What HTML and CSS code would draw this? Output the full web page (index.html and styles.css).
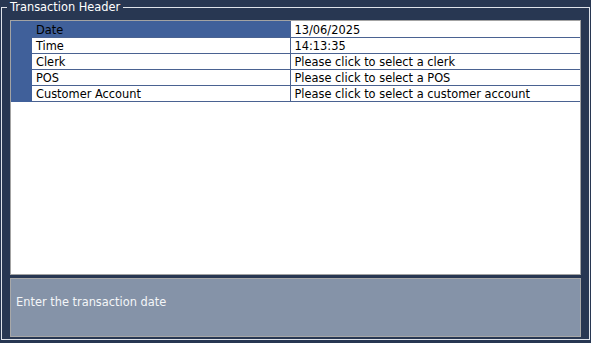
FILE: index.html
```html
<!DOCTYPE html>
<html>
<head>
<meta charset="utf-8">
<link rel="stylesheet" href="styles.css">
</head>
<body>
<fieldset class="group">
  <legend class="group-title">Transaction Header</legend>
  <div class="grid-panel">
    <table class="props">
      <tr class="selected"><td class="rh"></td><td class="name">Date</td><td class="value">13/06/2025</td></tr>
      <tr><td class="rh"></td><td class="name">Time</td><td class="value">14:13:35</td></tr>
      <tr><td class="rh"></td><td class="name">Clerk</td><td class="value">Please click to select a clerk</td></tr>
      <tr><td class="rh"></td><td class="name">POS</td><td class="value">Please click to select a POS</td></tr>
      <tr><td class="rh"></td><td class="name">Customer Account</td><td class="value">Please click to select a customer account</td></tr>
    </table>
  </div>
  <div class="status">Enter the transaction date</div>
</fieldset>
</body>
</html>
```
FILE: styles.css
```css
html, body {
  margin: 0;
  padding: 0;
  background: #283752;
  font-family: "DejaVu Sans", Verdana, sans-serif;
  font-size: 11.4px;
}
.group {
  margin: 0 1px 3px 1px;
  border: 1px solid #dfe3ea;
  padding: 5px 8px 2px 8px;
  box-sizing: border-box;
  height: 340px;
  display: flex;
  flex-direction: column;
}
.group-title {
  color: #ffffff;
  padding: 0 3px;
  margin-left: -3px;
  line-height: 15px;
  height: 15px;
}
.grid-panel {
  background: #ffffff;
  border: 1px solid #a3a3a3;
  height: 255px;
  box-sizing: border-box;
  flex: none;
}
.props {
  width: 100%;
  border-collapse: collapse;
  table-layout: fixed;
}
.props td {
  height: 15px;
  padding: 1px 0 0 4px;
  box-sizing: border-box;
  line-height: 14px;
  border-bottom: 1px solid #4a6291;
  color: #000000;
  white-space: nowrap;
  overflow: hidden;
}
.props tr.selected td {
  height: 16px;
  padding-top: 2px;
}
.props td.rh {
  width: 21px;
  padding: 0;
  background: #40609a;
  border-bottom-color: #40609a;
}
.props td.name {
  width: 258px;
  border-right: 1px solid #4a6291;
}
.props tr.selected td.name {
  background: #40609a;
}
.status {
  margin-top: 3px;
  height: 59px;
  box-sizing: border-box;
  background: #8593a8;
  border: 1px solid #a8a8a8;
  color: #f4f6f8;
  padding: 16px 0 0 5px;
  line-height: 15px;
  flex: none;
}
```
